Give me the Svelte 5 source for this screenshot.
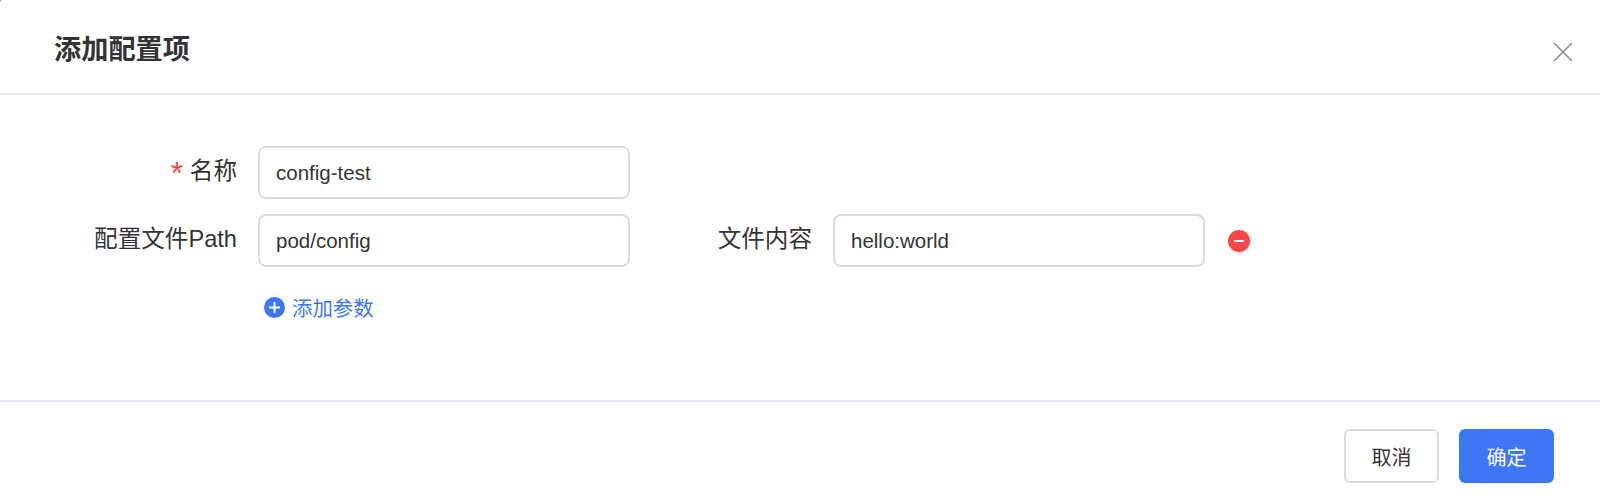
<script lang="ts">
	let name = $state('config-test');
	let params = $state([{ path: 'pod/config', content: 'hello:world' }]);
</script>

<div class="dialog">
	<header class="dialog-header">
		<h2>添加配置项</h2>
		<button class="close-btn" aria-label="关闭">
			<svg width="20" height="20" viewBox="0 0 20 20"><path d="M1 1L19 19M19 1L1 19" stroke="#8c8c8c" stroke-width="1.6" fill="none" /></svg>
		</button>
	</header>

	<div class="dialog-body">
		<div class="form-row">
			<label class="label"><span class="required">*</span> 名称</label>
			<input class="input" bind:value={name} />
		</div>
		{#each params as item}
			<div class="form-row">
				<label class="label">配置文件Path</label>
				<input class="input" bind:value={item.path} />
				<label class="label label-second">文件内容</label>
				<input class="input" bind:value={item.content} />
				<button class="remove-btn" aria-label="删除">
					<svg width="22" height="22" viewBox="0 0 22 22"><circle cx="11" cy="11" r="11" fill="#ff4447" /><rect x="6" y="10" width="10" height="2" rx="1" fill="#fff" /></svg>
				</button>
			</div>
		{/each}
		<button class="add-btn">
			<svg width="21" height="21" viewBox="0 0 22 22"><circle cx="11" cy="11" r="11" fill="#3d76f6" /><path d="M11 6v10M6 11h10" stroke="#fff" stroke-width="2" stroke-linecap="round" /></svg>
			添加参数
		</button>
	</div>

	<footer class="dialog-footer">
		<button class="btn">取消</button>
		<button class="btn btn-primary">确定</button>
	</footer>
</div>

<style>
	:global(body) {
		background: #999;
	}
	.dialog {
		width: 1600px;
		height: 503px;
		display: flex;
		flex-direction: column;
		font-family: "Liberation Sans", "Noto Sans CJK SC", sans-serif;
		color: #333;
		background: #fff;
		border-top-left-radius: 3px;
	}
	.dialog-header {
		height: 93px;
		flex: none;
		display: flex;
		align-items: center;
		justify-content: space-between;
		padding: 0 27px 0 54px;
		border-bottom: 2px solid #e3e6f2;
	}
	h2 {
		margin: 0;
		font-size: 27.2px;
		font-weight: 600;
		color: #333;
	}
	.close-btn {
		background: none;
		border: none;
		padding: 0;
		display: flex;
		margin-top: 11px;
	}
	.dialog-body {
		flex: 1;
		padding: 51px 0 0;
		display: flex;
		flex-direction: column;
		gap: 15px;
	}
	.form-row {
		display: flex;
		align-items: center;
	}
	.label {
		width: 237px;
		flex: none;
		text-align: right;
		font-size: 23.6px;
		line-height: 30px;
		color: #333;
		margin: -3px 21px 0 0;
	}
	.required {
		color: #ff4447;
		font-size: 32px;
		line-height: 20px;
		vertical-align: -5px;
	}
	.label-second {
		width: 182px;
		margin-right: 21px;
	}
	.input {
		width: 372px;
		height: 53px;
		box-sizing: border-box;
		border: 2px solid #dcdcdc;
		border-radius: 8px;
		padding: 0 16px;
		font-family: inherit;
		font-size: 20.5px;
		color: #333;
		background: #fff;
		outline: none;
	}
	.remove-btn {
		background: none;
		border: none;
		padding: 0;
		display: flex;
		margin-left: 23px;
	}
	.add-btn {
		align-self: flex-start;
		margin: 10px 0 0 264px;
		background: none;
		border: none;
		padding: 0;
		display: flex;
		align-items: center;
		gap: 7px;
		font-family: inherit;
		font-size: 20.4px;
		color: #3d76f6;
	}
	.dialog-footer {
		height: 103px;
		flex: none;
		box-sizing: border-box;
		border-top: 2px solid #e3e6f2;
		display: flex;
		justify-content: flex-end;
		gap: 20px;
		padding: 27px 46px 0 0;
	}
	.btn {
		width: 95px;
		height: 54px;
		box-sizing: border-box;
		border: 2px solid #dcdcdc;
		border-radius: 6px;
		background: #fff;
		font-family: inherit;
		font-size: 20px;
		color: #333;
	}
	.btn-primary {
		background: #3d76f6;
		border-color: #3d76f6;
		color: #fff;
	}
</style>
